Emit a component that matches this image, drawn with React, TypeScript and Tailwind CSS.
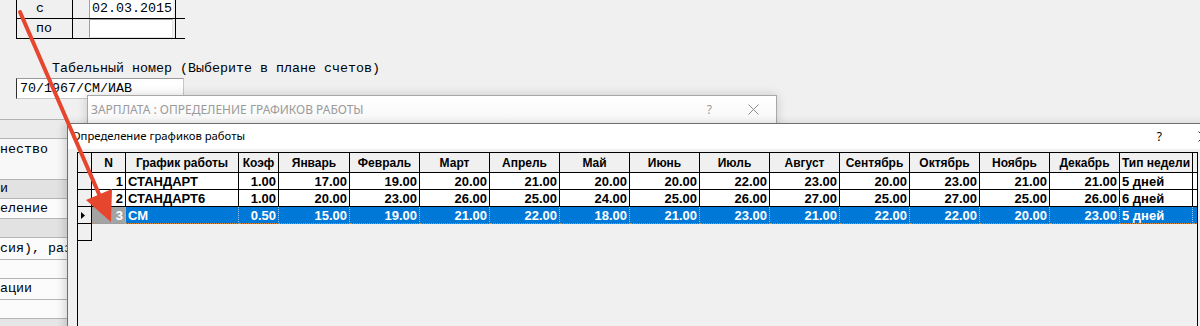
import React from "react";

// Table data for "Определение графиков работы"
const MONTHS = ["Январь", "Февраль", "Март", "Апрель", "Май", "Июнь", "Июль", "Август", "Сентябрь", "Октябрь", "Ноябрь", "Декабрь"];
const MONTH_W = ["w-[71px]", "w-[70px]", "w-[70px]", "w-[70px]", "w-[70px]", "w-[70px]", "w-[70px]", "w-[70px]", "w-[70px]", "w-[70px]", "w-[70px]", "w-[70px]"];

interface ScheduleRow {
  n: number;
  name: string;
  k: string;
  days: number[];
  week: string;
  selected?: boolean;
}

const ROWS: ScheduleRow[] = [
  { n: 1, name: "СТАНДАРТ", k: "1.00", days: [17, 19, 20, 21, 20, 20, 22, 23, 20, 23, 21, 21], week: "5 дней" },
  { n: 2, name: "СТАНДАРТ6", k: "1.00", days: [20, 23, 26, 25, 24, 25, 26, 27, 25, 27, 25, 26], week: "6 дней" },
  { n: 3, name: "СМ", k: "0.50", days: [15, 19, 21, 22, 18, 21, 23, 21, 22, 22, 20, 23], week: "5 дней", selected: true },
];

// Rows of the window that sits behind the dialogs on the left
const BACK_ROWS = [
  { h: "h-[19px]", bg: "bg-[#ebebeb]", text: "" },
  { h: "h-[41px]", bg: "bg-[#f8f8f8]", text: "нество" },
  { h: "h-[19px]", bg: "bg-[#e2e2e2]", text: "и" },
  { h: "h-[20px]", bg: "bg-[#fbfbfb]", text: "еление" },
  { h: "h-[19px]", bg: "bg-[#e2e2e2]", text: "" },
  { h: "h-[22px]", bg: "bg-[#fbfbfb]", text: "сия), раз" },
  { h: "h-[19px]", bg: "bg-[#fbfbfb]", text: "" },
  { h: "h-[21px]", bg: "bg-[#fbfbfb]", text: "ации" },
  { h: "h-[19px]", bg: "bg-[#fbfbfb]", text: "" },
  { h: "h-[20px]", bg: "bg-[#e6e6e6]", text: "" },
];

function cn(...parts: (string | false | undefined)[]) {
  return parts.filter(Boolean).join(" ");
}

function CloseIcon({ className }: { className?: string }) {
  return (
    <svg width="11" height="11" viewBox="0 0 11 11" className={className}>
      <path d="M0.5 0.5L10.5 10.5M10.5 0.5L0.5 10.5" stroke="currentColor" strokeWidth="1" fill="none" />
    </svg>
  );
}

function HeadCell({ w, children }: { w: string; children?: React.ReactNode }) {
  return (
    <div className={`${w} shrink-0 border-r border-b border-black bg-[#f0f0f0] flex items-center justify-center text-[12px] font-bold leading-none`}>
      {children}
    </div>
  );
}

function DataCell({ w, sel, right, gray, children }: { w: string; sel?: boolean; right?: boolean; gray?: boolean; children?: React.ReactNode }) {
  return (
    <div
      className={cn(
        w,
        "shrink-0 border-r border-b flex items-center px-[2px] text-[13px] font-bold leading-none whitespace-nowrap",
        right ? "justify-end" : "justify-start",
        sel
          ? "border-dotted border-r-[#9cc3ec] border-b-[#d98a3a] text-white"
          : "border-black bg-white text-black",
        sel && (gray ? "bg-[#a3a3a3]" : "bg-[#0078d7]")
      )}
    >
      {children}
    </div>
  );
}

export default function App() {
  return (
    <div className="relative w-[1200px] h-[326px] overflow-hidden bg-[#f0f0f0] font-['Liberation_Mono',monospace] text-[13.33px] text-black">
      {/* Background form: period + employee number */}
      <div className="ml-[16px] mt-[-2px] w-[169px]">
        <div className="flex h-[21px] border-b border-black">
          <div className="w-[57px] border-l border-r border-black pl-[19px] flex items-center pt-[2px]">с</div>
          <div className="w-[103px] border-r border-black pl-[16px] flex items-end">
            <div className="w-[84px] h-[19px] bg-white border-l border-[#a0a0a0] pl-[2px] leading-[19px]">02.03.2015</div>
          </div>
          <div className="w-[9px]" />
        </div>
        <div className="flex h-[20px] border-b border-black">
          <div className="w-[57px] border-l border-r border-black pl-[19px] flex items-center">по</div>
          <div className="w-[103px] border-r border-black pl-[16px] flex">
            <div className="w-[84px] h-[19px] bg-white border border-[#a0a0a0] border-r-[#e3e3e3] border-b-[#e3e3e3]" />
          </div>
          <div className="w-[9px]" />
        </div>
      </div>

      <div className="ml-[52px] mt-[22px] leading-[16px] whitespace-pre">Табельный номер (Выберите в плане счетов)</div>
      <div className="ml-[16px] mt-[1px] w-[168px] h-[21px] bg-white border border-t-[#9a9a9a] border-l-[#303030] border-r-[#c8c8c8] border-b-[#c8c8c8] pl-[3px] leading-[19px]">
        70/1967/СМ/ИАВ
      </div>

      {/* Window behind, on the left */}
      <div className="absolute left-0 top-[119px] w-[67px] h-[210px] flex flex-col overflow-hidden">
        {BACK_ROWS.map((r, i) => (
          <div key={i} className={`${r.h} ${r.bg} shrink-0 border-t border-[#b4b4b4] whitespace-pre leading-[16px] flex ${i === 1 ? "items-start pt-[3px]" : "items-center"}`}>
            {r.text}
          </div>
        ))}
      </div>

      {/* Dialog: ЗАРПЛАТА (behind) */}
      <div className="absolute left-[87px] top-[95px] w-[690px] h-[60px] bg-white border border-[#a8a8a8] shadow-[0_0_10px_rgba(0,0,0,0.16)] font-['Noto_Sans',sans-serif]">
        <div className="h-[27px] flex items-center pl-[3px] pr-[17px] text-[12px] text-[#9a9a9a] bg-gradient-to-b from-white to-[#f7f7f7]">
          <span>ЗАРПЛАТА : ОПРЕДЕЛЕНИЕ ГРАФИКОВ РАБОТЫ</span>
          <span className="ml-auto">?</span>
          <CloseIcon className="ml-[36px] text-[#8c8c8c]" />
        </div>
      </div>

      {/* Dialog: Определение графиков работы */}
      <div className="absolute left-[67px] top-[123px] w-[1160px] h-[230px] bg-[#f0f0f0] border-l border-t border-[#6f6f6f] shadow-[-3px_0_8px_rgba(0,0,0,0.15)]">
        <div className="h-[25px] bg-white flex items-center pl-[4px] pr-[18px] text-[11.3px] font-['Noto_Sans',sans-serif]">
          <span>Определение графиков работы</span>
          <span className="ml-auto text-[12px]">?</span>
          <CloseIcon className="ml-[36px] text-[#333]" />
        </div>

        <div className="ml-[9px] mt-[3px] w-[1121px] h-[200px] flex border-l border-t border-r border-black font-['Liberation_Sans',Arial,sans-serif]">
          {/* Row indicator column */}
          <div className="w-[14px] shrink-0 flex flex-col">
            <div className="h-[20px] border-r border-b border-black bg-[#f0f0f0]" />
            <div className="h-[17px] border-r border-b border-black bg-[#f0f0f0]" />
            <div className="h-[17px] border-r border-b border-black bg-[#f0f0f0]" />
            <div className="h-[17px] border-r border-b border-black bg-[#f0f0f0] flex items-center pl-[3px]">
              <svg width="4" height="7" viewBox="0 0 4 7">
                <polygon points="0,0 4,3.5 0,7" fill="black" />
              </svg>
            </div>
            <div className="h-[17px] border-r border-b border-black bg-[#f0f0f0]" />
          </div>

          <div className="flex-1 flex flex-col">
            <div className="flex h-[20px]">
              <HeadCell w="w-[34px]">N</HeadCell>
              <HeadCell w="w-[113px]">График работы</HeadCell>
              <HeadCell w="w-[40px]">Коэф</HeadCell>
              {MONTHS.map((m, i) => (
                <HeadCell key={m} w={MONTH_W[i]}>{m}</HeadCell>
              ))}
              <HeadCell w="w-[73px]">Тип недели</HeadCell>
              <div className="flex-1 border-b border-black bg-[#f0f0f0]" />
            </div>

            {ROWS.map((r) => (
              <div key={r.n} className="flex h-[17px]">
                <DataCell w="w-[34px]" sel={r.selected} gray right>{r.n}</DataCell>
                <DataCell w="w-[113px]" sel={r.selected}>{r.name}</DataCell>
                <DataCell w="w-[40px]" sel={r.selected} right>{r.k}</DataCell>
                {r.days.map((d, i) => (
                  <DataCell key={i} w={MONTH_W[i]} sel={r.selected} right>{d.toFixed(2)}</DataCell>
                ))}
                <DataCell w="w-[73px]" sel={r.selected}>{r.week}</DataCell>
                <div className={cn("flex-1 border-b", r.selected ? "border-dotted border-[#d98a3a] bg-[#0078d7]" : "border-black bg-white")} />
              </div>
            ))}
          </div>
        </div>
      </div>

      {/* Red annotation arrow */}
      <svg className="absolute inset-0 pointer-events-none" width="1200" height="326" viewBox="0 0 1200 326">
        <line x1="20" y1="12" x2="102" y2="201" stroke="#e6452e" strokeWidth="4" strokeLinecap="round" />
        <polygon points="111,222 86,200 112,189" fill="#e6452e" />
      </svg>
    </div>
  );
}
